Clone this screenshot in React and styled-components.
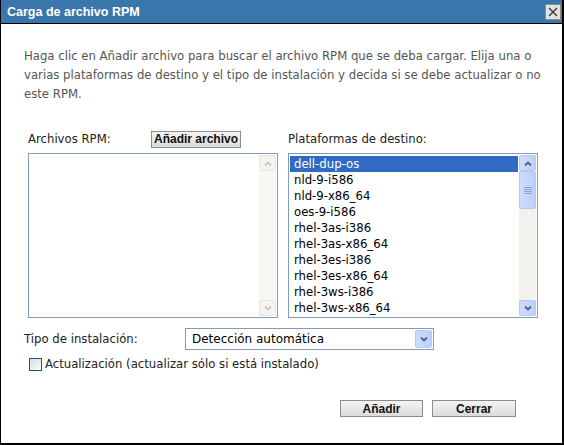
import React from 'react'
import styled, { createGlobalStyle } from 'styled-components'

const GlobalStyle = createGlobalStyle`
  html, body {
    margin: 0;
    padding: 0;
    background: #fff;
  }
  * { box-sizing: border-box; }
`

const platforms = [
  'dell-dup-os',
  'nld-9-i586',
  'nld-9-x86_64',
  'oes-9-i586',
  'rhel-3as-i386',
  'rhel-3as-x86_64',
  'rhel-3es-i386',
  'rhel-3es-x86_64',
  'rhel-3ws-i386',
  'rhel-3ws-x86_64',
]

const font = `"DejaVu Sans", Verdana, sans-serif`
const boldFont = `"Liberation Sans", Arial, sans-serif`

const Window = styled.div`
  width: 564px;
  height: 445px;
  border: 1px solid #000;
  border-top: none;
  border-right-width: 2px;
  border-bottom-width: 2px;
  display: flex;
  flex-direction: column;
  font-family: ${font};
  background: #fff;
`

const TitleBar = styled.div`
  height: 24px;
  flex: none;
  background: #3a76ab;
  border-bottom: 1px solid #000;
  display: flex;
  align-items: center;
  justify-content: space-between;
  padding: 0 1px 0 6px;
`

const Title = styled.span`
  color: #fff;
  font-family: ${boldFont};
  font-weight: bold;
  font-size: 12.5px;
`

const CloseBtn = styled.div`
  width: 16px;
  height: 16px;
  background: #e4e4e4;
  border: 1px solid #8a8a8a;
  display: flex;
  align-items: center;
  justify-content: center;
`

const Body = styled.div`
  flex: 1;
  padding: 23px 46px 0 23px;
  display: flex;
  flex-direction: column;
`

const Intro = styled.p`
  margin: 0;
  font-size: 11.7px;
  line-height: 19px;
  color: #555;
  width: 528px;
`

const Columns = styled.div`
  margin-top: 27px;
  padding-left: 4px;
  display: grid;
  grid-template-columns: 250px 250px;
  column-gap: 10px;
`

const Column = styled.div`
  display: flex;
  flex-direction: column;
`

const ColHead = styled.div`
  height: 16px;
  display: flex;
  align-items: center;
  margin-bottom: 6px;
`

const Label = styled.span`
  font-size: 11.7px;
  color: #222;
  width: ${p => p.$w || 'auto'};
  flex: none;
  white-space: nowrap;
`

const SmallButton = styled.button`
  font-family: ${boldFont};
  font-size: 12px;
  font-weight: bold;
  color: #111;
  height: 17px;
  padding: 0;
  background: linear-gradient(#f4f4f4, #dcdcdc);
  border: 1px solid #8c8c8c;
  border-radius: 0;
  line-height: 14px;
  white-space: nowrap;
  width: ${p => p.$w || 'auto'};
`

const ListBox = styled.div`
  height: 165px;
  border: 1px solid #7f9db9;
  display: flex;
  background: #fff;
`

const Items = styled.div`
  flex: 1;
  padding: 2px 1px 0 1px;
  overflow: hidden;
`

const Item = styled.div`
  height: 16px;
  line-height: 16px;
  font-size: 11.7px;
  padding-left: 4px;
  color: ${p => (p.$sel ? '#fff' : '#000')};
  background: ${p => (p.$sel ? '#316ac5' : 'transparent')};
  white-space: nowrap;
`

const ScrollBar = styled.div`
  width: 17px;
  margin: 1px 1px 1px 0;
  display: flex;
  flex-direction: column;
  background: ${p => (p.$off ? '#f7f7f3' : '#f3f1eb')};
`

const ScrollBtn = styled.div`
  height: 16px;
  flex: none;
  display: flex;
  align-items: center;
  justify-content: center;
  border-radius: 2px;
  border: 1px solid ${p => (p.$off ? '#e6e6e0' : '#b4c8f6')};
  background: ${p => (p.$off ? '#f4f4ef' : 'linear-gradient(90deg, #cfdcfb, #bccffa)')};
`

const Thumb = styled(ScrollBtn)`
  height: 38px;
`

const Track = styled.div`
  flex: 1;
`

const Chevron = ({ up, color = '#4d6185' }) => (
  <svg width="8" height="5" viewBox="0 0 8 5">
    <path
      d={up ? 'M1 4.5 L4 1.5 L7 4.5' : 'M1 0.5 L4 3.5 L7 0.5'}
      fill="none"
      stroke={color}
      strokeWidth="1.8"
    />
  </svg>
)

const Grip = () => (
  <svg width="8" height="7" viewBox="0 0 8 7">
    {[0.5, 2.5, 4.5, 6.5].map(y => (
      <line key={y} x1="0" x2="8" y1={y} y2={y} stroke="#8aa5e4" strokeWidth="1" />
    ))}
  </svg>
)

const FieldRow = styled.div`
  margin-top: 10px;
  display: flex;
  align-items: center;
  height: 22px;
`

const Select = styled.div`
  width: 249px;
  height: 22px;
  border: 1px solid #7f9db9;
  display: flex;
  align-items: center;
  justify-content: space-between;
  padding: 1px 1px 1px 6px;
  font-size: 12px;
  color: #000;
`

const SelectBtn = styled(ScrollBtn)`
  width: 17px;
  height: 18px;
`

const CheckRow = styled.label`
  margin-top: 7px;
  padding-left: 5px;
  display: flex;
  align-items: center;
  gap: 3px;
  font-size: 11.7px;
  color: #222;
`

const Check = styled.span`
  width: 13px;
  height: 13px;
  border: 1px solid #1c5180;
  background: linear-gradient(135deg, #dcdcd7, #fbfbfa);
`

const Actions = styled.div`
  margin-top: 29px;
  display: flex;
  justify-content: flex-end;
  gap: 9px;
`

export default function App() {
  return (
    <>
      <GlobalStyle />
      <Window>
        <TitleBar>
          <Title>Carga de archivo RPM</Title>
          <CloseBtn>
            <svg width="10" height="10" viewBox="0 0 10 10">
              <path d="M1 1 L9 9 M9 1 L1 9" stroke="#444" strokeWidth="1.6" />
            </svg>
          </CloseBtn>
        </TitleBar>
        <Body>
          <Intro>
            Haga clic en Añadir archivo para buscar el archivo RPM que se deba cargar. Elija una o
            varias plataformas de destino y el tipo de instalación y decida si se debe actualizar o no
            este RPM.
          </Intro>
          <Columns>
            <Column>
              <ColHead>
                <Label $w="123px">Archivos RPM:</Label>
                <SmallButton $w="90px">Añadir archivo</SmallButton>
              </ColHead>
              <ListBox>
                <Items />
                <ScrollBar $off>
                  <ScrollBtn $off><Chevron up color="#c9cbc0" /></ScrollBtn>
                  <Track />
                  <ScrollBtn $off><Chevron color="#c9cbc0" /></ScrollBtn>
                </ScrollBar>
              </ListBox>
            </Column>
            <Column>
              <ColHead>
                <Label>Plataformas de destino:</Label>
              </ColHead>
              <ListBox>
                <Items>
                  {platforms.map((p, i) => (
                    <Item key={p} $sel={i === 0}>{p}</Item>
                  ))}
                </Items>
                <ScrollBar>
                  <ScrollBtn><Chevron up /></ScrollBtn>
                  <Thumb><Grip /></Thumb>
                  <Track />
                  <ScrollBtn><Chevron /></ScrollBtn>
                </ScrollBar>
              </ListBox>
            </Column>
          </Columns>
          <FieldRow>
            <Label $w="161px">Tipo de instalación:</Label>
            <Select>
              <span>Detección automática</span>
              <SelectBtn><Chevron /></SelectBtn>
            </Select>
          </FieldRow>
          <CheckRow>
            <Check />
            Actualización (actualizar sólo si está instalado)
          </CheckRow>
          <Actions>
            <SmallButton $w="83px">Añadir</SmallButton>
            <SmallButton $w="84px">Cerrar</SmallButton>
          </Actions>
        </Body>
      </Window>
    </>
  )
}
